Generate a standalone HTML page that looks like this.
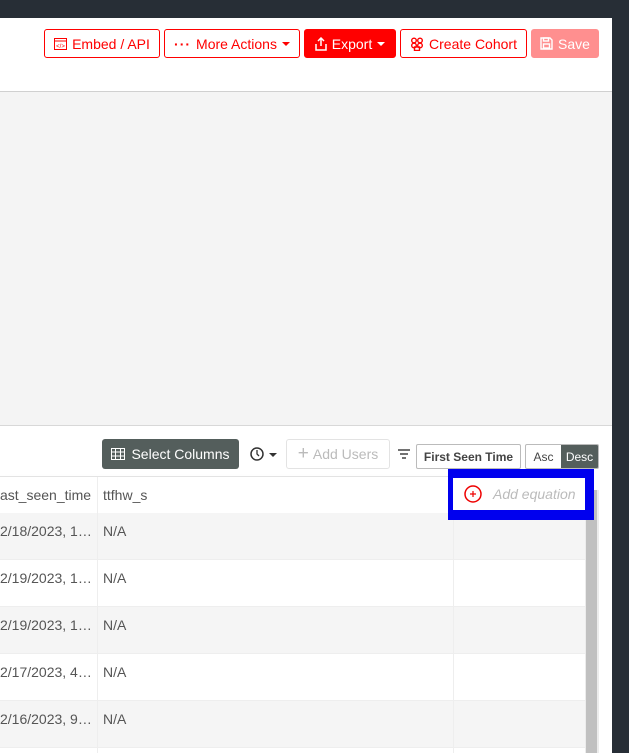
<!DOCTYPE html>
<html><head><style>
*{box-sizing:border-box;margin:0;padding:0}
html,body{width:629px;height:753px;overflow:hidden}
body{background:#272e36;font-family:"Liberation Sans",sans-serif;position:relative}
.panel{position:absolute;left:0;top:18px;width:612px;height:735px;background:#fff;overflow:hidden}
.abs{position:absolute}
.btn{position:absolute;top:11px;height:29px;border:1px solid #f00;border-radius:3px;color:#f00;font-size:14px;display:flex;align-items:center;justify-content:center;gap:5px;background:#fff;white-space:nowrap}
.caret{display:inline-block;width:0;height:0;border-left:4px solid transparent;border-right:4px solid transparent;border-top:4px solid currentColor}
.row{position:absolute;left:0;width:586px;height:47px;border-bottom:1px solid #eee;font-size:14px;color:#555}
.row span{position:absolute;top:10px}
</style></head><body>
<div class="panel">
 <div class="btn" style="left:44px;width:116px"><svg width="13" height="12" viewBox="0 0 13 12"><rect x="0.5" y="0.5" width="12" height="11" fill="none" stroke="#f00"/><line x1="0" y1="3" x2="13" y2="3" stroke="#f00"/><text x="6.5" y="10" font-size="6" fill="#f00" text-anchor="middle">&lt;/&gt;</text></svg>Embed / API</div>
 <div class="btn" style="left:164px;width:136px"><span style="letter-spacing:1px;font-weight:bold">···</span>More Actions<span class="caret"></span></div>
 <div class="btn" style="left:304px;width:92px;background:#f00;color:#fff"><svg width="12" height="14" viewBox="0 0 12 14"><path d="M6 1v8M3 4l3-3 3 3M1 7v6h10V7" fill="none" stroke="#fff" stroke-width="1.5"/></svg>Export<span class="caret"></span></div>
 <div class="btn" style="left:400px;width:127px"><svg width="14" height="14" viewBox="0 0 14 14" fill="none" stroke="#f00" stroke-width="1.4"><circle cx="4" cy="3.5" r="2.3"/><circle cx="10" cy="3.5" r="2.3"/><circle cx="4" cy="8.5" r="2.3"/><circle cx="10" cy="8.5" r="2.3"/><rect x="4.5" y="10" width="5" height="3.5"/></svg>Create Cohort</div>
 <div class="btn" style="left:531px;width:68px;background:#ff8f8f;border-color:#ff8f8f;color:#fff"><svg width="13" height="13" viewBox="0 0 13 13" fill="none" stroke="#fff" stroke-width="1.4"><path d="M1 1h9l2 2v9H1z"/><rect x="3.5" y="1" width="5" height="3"/><rect x="3.5" y="7" width="6" height="4"/></svg>Save</div>
 <div class="abs" style="left:0;top:73px;width:612px;height:335px;background:#f4f4f4;border-top:1px solid #d0d0d0;border-bottom:1px solid #d8d8d8"></div>
 <div class="abs" style="left:102px;top:421px;width:137px;height:30px;background:#545e5c;border-radius:3px;color:#fff;font-size:14px;display:flex;align-items:center;justify-content:center;gap:6px"><svg width="14" height="12" viewBox="0 0 14 12" fill="none" stroke="#fff"><rect x="0.5" y="0.5" width="13" height="11"/><path d="M0 4h14M0 8h14M4.5 0v12M9.5 0v12"/></svg>Select Columns</div>
 <svg class="abs" style="left:250px;top:428px" width="30" height="16" viewBox="0 0 30 16"><circle cx="7" cy="8" r="6" fill="none" stroke="#333" stroke-width="1.5"/><path d="M7 4v4l2 2" fill="none" stroke="#333" stroke-width="1.3"/><path d="M19 7h8l-4 4z" fill="#333"/></svg>
 <div class="abs" style="left:286px;top:421px;width:104px;height:30px;border:1px solid #e3e3e3;border-radius:3px;color:#bbb;font-size:14px;display:flex;align-items:center;justify-content:center;gap:4px"><span style="font-size:19px;font-weight:300">+</span>Add Users</div>
 <svg class="abs" style="left:397px;top:430px" width="14" height="12" viewBox="0 0 14 12"><path d="M1 2h12M3 6h8M5 10h4" stroke="#444" stroke-width="1.5"/></svg>
 <div class="abs" style="left:416px;top:426px;width:105px;height:25px;border:1px solid #bbb;border-radius:2px;font-size:12px;font-weight:bold;color:#444;display:flex;align-items:center;justify-content:center">First Seen Time</div>
 <div class="abs" style="left:525px;top:426px;width:74px;height:25px;border:1px solid #bbb;border-radius:2px;font-size:12px;display:flex;overflow:hidden"><div style="width:35px;display:flex;align-items:center;justify-content:center;color:#444">Asc</div><div style="flex:1;background:#545e5c;color:#fff;display:flex;align-items:center;justify-content:center">Desc</div></div>
 <div class="abs" style="left:0;top:458px;width:586px;height:37px;border-top:1px solid #e3e3e3;box-shadow:0 3px 5px rgba(0,0,0,0.08);background:#fff;font-size:14px;color:#555"><span class="abs" style="left:0;top:10px">ast_seen_time</span><span class="abs" style="left:103px;top:10px">ttfhw_s</span><div class="abs" style="left:97px;top:0;width:1px;height:37px;background:#eee"></div></div>
 <div class="row" style="top:495px;background:#f5f5f5"><span style="left:0">2/18/2023, 1…</span><span style="left:103px">N/A</span></div>
 <div class="row" style="top:542px;background:#fff"><span style="left:0">2/19/2023, 1…</span><span style="left:103px">N/A</span></div>
 <div class="row" style="top:589px;background:#f5f5f5"><span style="left:0">2/19/2023, 1…</span><span style="left:103px">N/A</span></div>
 <div class="row" style="top:636px;background:#fff"><span style="left:0">2/17/2023, 4…</span><span style="left:103px">N/A</span></div>
 <div class="row" style="top:683px;background:#f5f5f5"><span style="left:0">2/16/2023, 9…</span><span style="left:103px">N/A</span></div>
 <div class="abs" style="left:97px;top:495px;width:1px;height:240px;background:#eee"></div>
 <div class="abs" style="left:453px;top:495px;width:1px;height:240px;background:#eee"></div>
 <div class="abs" style="left:585px;top:472px;width:14px;height:263px;background:#ececec"></div>
 <div class="abs" style="left:586px;top:472px;width:11px;height:263px;background:#c0c0c0"></div>
 <div class="abs" style="left:448px;top:451px;width:146px;height:51px;background:#0000ee"></div>
 <div class="abs" style="left:453px;top:460px;width:132px;height:32px;background:#fff;font-size:14px;font-style:italic;color:#bbb;display:flex;align-items:center;gap:11px;padding-left:11px"><svg width="18" height="18" viewBox="0 0 18 18"><circle cx="9" cy="9" r="8" fill="none" stroke="#e00" stroke-width="1.5"/><path d="M9 6v6M6 9h6" stroke="#e00" stroke-width="1.2"/></svg>Add equation</div>
</div>
</body></html>
